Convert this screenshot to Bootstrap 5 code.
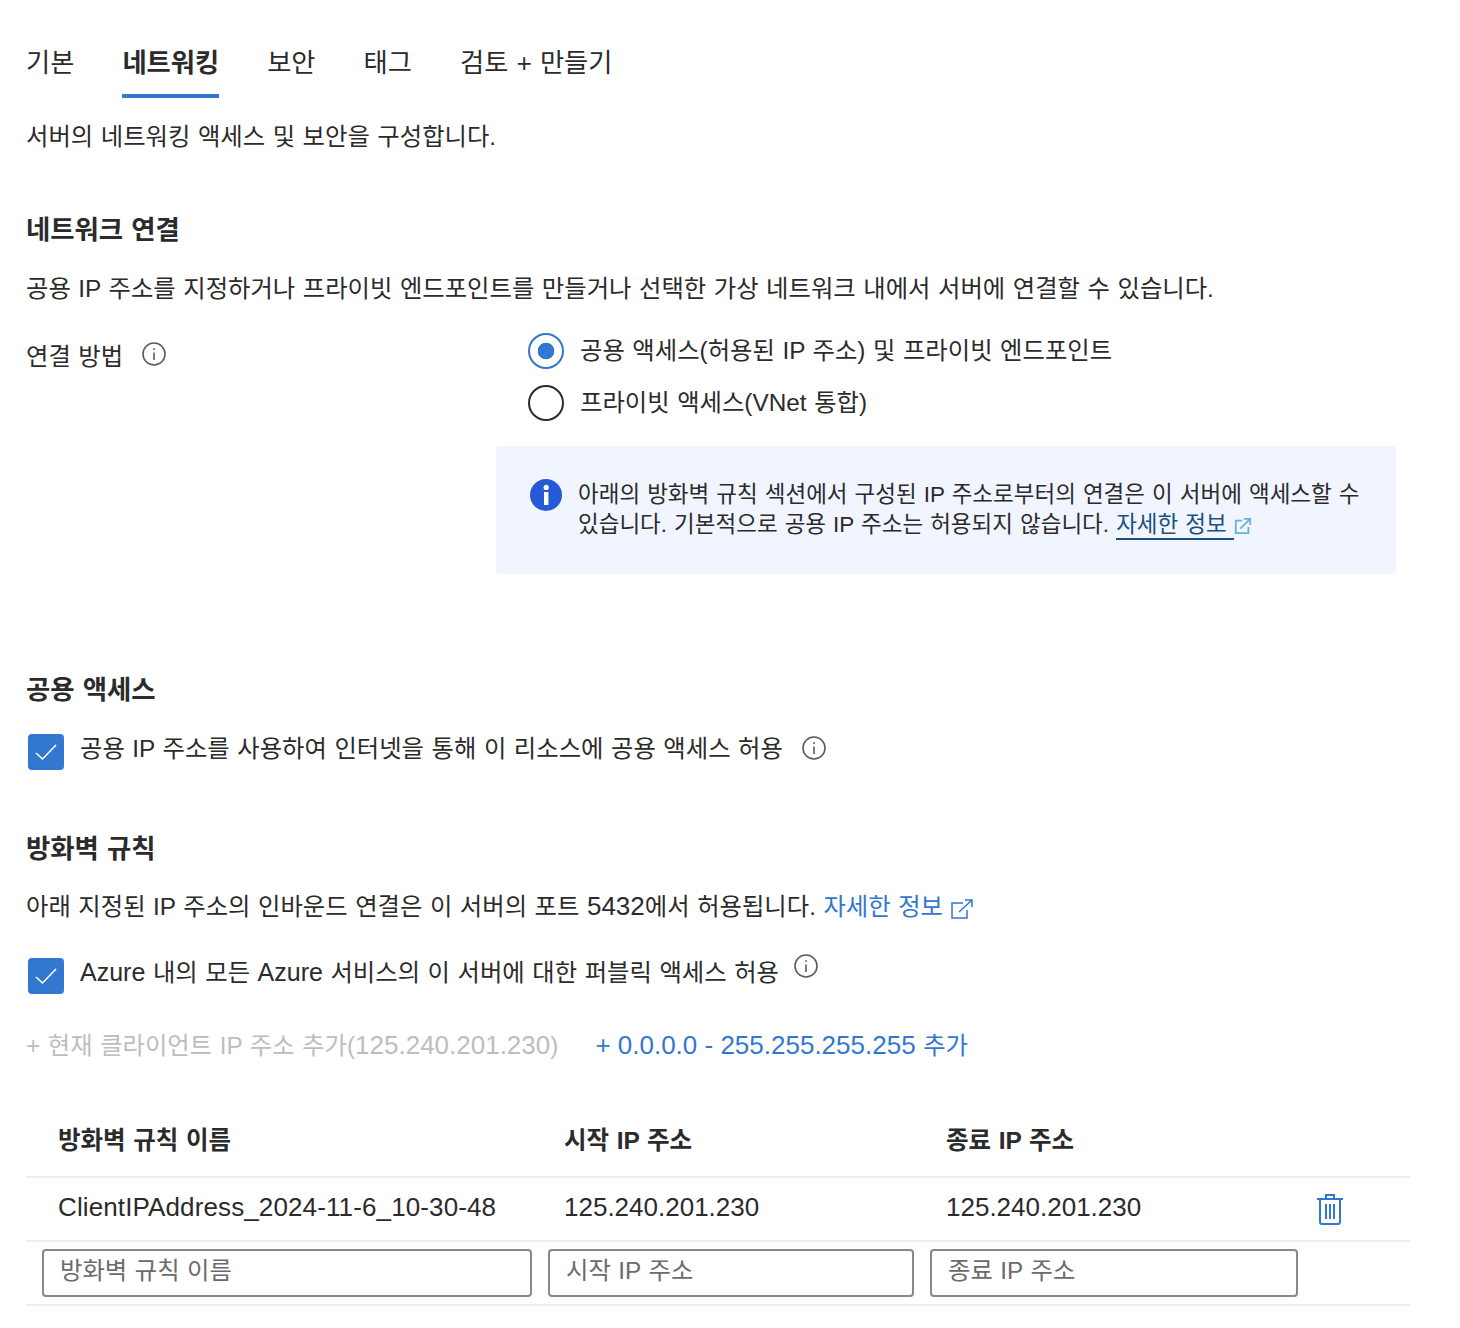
<!DOCTYPE html>
<html lang="ko">
<head>
<meta charset="utf-8">
<title>네트워킹</title>
<link href="https://cdn.jsdelivr.net/npm/bootstrap@5.3.0/dist/css/bootstrap.min.css" rel="stylesheet">
<style>
body{font-family:"Liberation Sans","Noto Sans CJK KR",sans-serif;font-size:24.35px;line-height:36px;word-spacing:.8px;color:#2b2b2b;background:#fff}
.lat{font-size:26px;word-spacing:0;line-height:1}
.az{font-size:25px;line-height:1}
.pg{padding:44px 50px 0 26px;width:1460px}
.tabbar{gap:48px}
.tabbar .nav-link{padding:1px 0 13px;color:#2b2b2b;border-bottom:4px solid transparent;font-size:26.3px;line-height:36px}
.tabbar .nav-link.active{font-weight:700;border-bottom-color:#3277d0;color:#2b2b2b}
.sect{font-size:26.4px;line-height:36px;font-weight:700;margin:0}
.m-21{margin-top:21px}.m-57{margin-top:57px}.m-23{margin-top:23px}.m-26{margin-top:26px}.m-98{margin-top:98px}.m-61{margin-top:61px}.m-22{margin-top:22px}.m-30{margin-top:30px}.m-34{margin-top:34px}
.leftcol{width:470px;padding-top:6px;gap:19px}
.leftcol svg{margin-top:3px}
.opts{width:900px}
.opts .radios{padding-left:32px;display:flex;flex-direction:column;gap:16px}
.form-check-input.rd{width:36px;height:36px;margin:0;border:2px solid #2b2b2b;background-color:#fff;flex:none}
.form-check-input.rd:checked{border:2px solid #3277d0;background-color:#fff;background-image:radial-gradient(circle,#3277d0 0 8px,transparent 8.6px);background-size:auto}
.infobox{margin-top:25px;background:#f0f5ff;border-radius:4px;padding:32px 20px 36px 34px;gap:16px;height:128px}
.infobox>svg{flex:none;margin-top:1px}
.infotxt{line-height:30px;font-size:22.5px;margin-top:2px;white-space:nowrap}
.linkdark{color:#1c4f82;text-decoration:none;border-bottom:2px solid #1c4f82;padding-bottom:1px}
.linkblue{color:#3277d0;text-decoration:none}
.form-check-input.ck{width:36px;height:36px;margin:0;border-radius:4px;background-color:#3277d0;border:none;flex:none;background-size:24px 24px;background-position:center;background-repeat:no-repeat;background-image:url("data:image/svg+xml,%3Csvg xmlns='http://www.w3.org/2000/svg' viewBox='0 0 24 24'%3E%3Cpath d='M2 13l6.5 6L22 5' fill='none' stroke='%23fff' stroke-width='1.6'/%3E%3C/svg%3E")}
.ckrow{gap:16px;padding-left:2px}
.ck3{margin-top:3px!important}
.ic5{margin-top:5px;margin-left:3px}
.icup{margin-top:-1px;margin-left:-1px}
.dimmed{color:#bdbdbd}
.acts{gap:37px}
.rules{table-layout:fixed;width:1384px;margin:37px 0 0;color:#2b2b2b;font-size:24.5px;line-height:36px}
.rules th,.rules td{border-bottom:2px solid #eee;background:transparent;box-shadow:none}
.rules th{padding:22px 0 17px 32px;font-weight:700}
.rules .drow td{padding:11px 0 15px 32px;font-size:26px;word-spacing:0}
.rules .drow td.rname{letter-spacing:.12px}
.rules .irow td{padding:7px 0 7px 16px}
.rules .drow td.del{padding:11px 0 0 19px;vertical-align:top}
.fld{height:48px;border:2px solid #888;border-radius:4px;padding:0 16px 5px;font-size:24.35px;word-spacing:.8px;line-height:36px;color:#2b2b2b;font-family:inherit;box-shadow:none}
.fld::placeholder{color:#6b6b6b;opacity:1}
</style>
</head>
<body>
<div class="pg">
  <ul class="nav tabbar">
    <li class="nav-item"><a class="nav-link" href="#">기본</a></li>
    <li class="nav-item"><a class="nav-link active" href="#">네트워킹</a></li>
    <li class="nav-item"><a class="nav-link" href="#">보안</a></li>
    <li class="nav-item"><a class="nav-link" href="#">태그</a></li>
    <li class="nav-item"><a class="nav-link" href="#">검토 + 만들기</a></li>
  </ul>
  <p class="mb-0 m-21">서버의 네트워킹 액세스 및 보안을 구성합니다.</p>
  <h2 class="sect m-57">네트워크 연결</h2>
  <p class="mb-0 m-23">공용 IP 주소를 지정하거나 프라이빗 엔드포인트를 만들거나 선택한 가상 네트워크 내에서 서버에 연결할 수 있습니다.</p>
  <div class="d-flex m-26">
    <div class="leftcol d-flex align-items-start">
      <span>연결 방법</span>
      <svg width="24" height="24" viewBox="0 0 24 24" fill="none" stroke="#5c5c5c"><circle cx="12" cy="12" r="11" stroke-width="1.6"/><path d="M12 10.5V18" stroke-width="1.6"/><path d="M12 6.2v1.8" stroke-width="1.6"/></svg>
    </div>
    <div class="opts">
      <div class="radios">
        <label class="d-flex align-items-start gap-3"><input class="form-check-input rd" type="radio" name="conn" checked><span>공용 액세스(허용된 IP 주소) 및 프라이빗 엔드포인트</span></label>
        <label class="d-flex align-items-start gap-3"><input class="form-check-input rd" type="radio" name="conn"><span>프라이빗 액세스(VNet 통합)</span></label>
      </div>
      <div class="infobox d-flex align-items-start">
        <svg width="32" height="32" viewBox="0 0 32 32"><circle cx="16" cy="16" r="16" fill="#2659d6"/><rect x="14" y="13" width="4.4" height="13" fill="#fff"/><circle cx="16.2" cy="8.4" r="2.6" fill="#fff"/></svg>
        <div class="infotxt">아래의 방화벽 규칙 섹션에서 구성된 IP 주소로부터의 연결은 이 서버에 액세스할 수<br>있습니다. 기본적으로 공용 IP 주소는 허용되지 않습니다. <a href="#" class="linkdark">자세한 정보 </a> <svg width="18" height="18" viewBox="0 0 20 20" fill="none" stroke="#6ab0de" stroke-width="2"><path d="M9 4H2v14h14v-7"/><path d="M7 13L18 2M11 2h7v7"/></svg></div>
      </div>
    </div>
  </div>
  <h2 class="sect m-98">공용 액세스</h2>
  <div class="d-flex align-items-start ckrow m-23">
    <input class="form-check-input ck ck3" type="checkbox" checked>
    <span>공용 IP 주소를 사용하여 인터넷을 통해 이 리소스에 공용 액세스 허용</span>
    <svg class="ic5" width="24" height="24" viewBox="0 0 24 24" fill="none" stroke="#5c5c5c"><circle cx="12" cy="12" r="11" stroke-width="1.6"/><path d="M12 10.5V18" stroke-width="1.6"/><path d="M12 6.2v1.8" stroke-width="1.6"/></svg>
  </div>
  <h2 class="sect m-61">방화벽 규칙</h2>
  <p class="mb-0 m-22">아래 지정된 IP 주소의 인바운드 연결은 이 서버의 포트 <span class="lat">5432</span>에서 허용됩니다. <a href="#" class="linkblue">자세한 정보 <svg width="22" height="20" viewBox="0 0 22 20" fill="none" stroke="#3277d0" stroke-width="1.5"><path d="M12 4H1v15h15v-8"/><path d="M8 13L21 1M14 1h7v7"/></svg></a></p>
  <div class="d-flex align-items-start ckrow m-30">
    <input class="form-check-input ck ck3" type="checkbox" checked>
    <span><span class="az">Azure</span> 내의 모든 <span class="az">Azure</span> 서비스의 이 서버에 대한 퍼블릭 액세스 허용</span>
    <svg class="icup" width="24" height="24" viewBox="0 0 24 24" fill="none" stroke="#5c5c5c"><circle cx="12" cy="12" r="11" stroke-width="1.6"/><path d="M12 10.5V18" stroke-width="1.6"/><path d="M12 6.2v1.8" stroke-width="1.6"/></svg>
  </div>
  <div class="d-flex acts m-34">
    <span class="dimmed">+ 현재 클라이언트 IP 주소 추가(<span class="lat">125.240.201.230</span>)</span>
    <a href="#" class="linkblue"><span class="lat">+ 0.0.0.0 - 255.255.255.255</span> 추가</a>
  </div>
  <table class="table rules">
    <colgroup><col style="width:506px"><col style="width:382px"><col style="width:384px"><col style="width:112px"></colgroup>
    <thead><tr><th>방화벽 규칙 이름</th><th>시작 IP 주소</th><th>종료 IP 주소</th><th></th></tr></thead>
    <tbody>
      <tr class="drow"><td class="rname">ClientIPAddress_2024-11-6_10-30-48</td><td>125.240.201.230</td><td>125.240.201.230</td><td class="del"><svg width="26" height="32" viewBox="0 0 26 32" fill="none" stroke="#3277d0" stroke-width="2"><path d="M0 6h26"/><path d="M9 5V2h8v3"/><path d="M3 6v23a2 2 0 0 0 2 2h16a2 2 0 0 0 2-2V6"/><path d="M9 11v15M13 11v15M17 11v15"/></svg></td></tr>
      <tr class="irow"><td><input class="form-control fld" placeholder="방화벽 규칙 이름"></td><td><input class="form-control fld" placeholder="시작 IP 주소"></td><td><input class="form-control fld" placeholder="종료 IP 주소"></td><td></td></tr>
    </tbody>
  </table>
</div>
<script src="https://cdn.jsdelivr.net/npm/bootstrap@5.3.0/dist/js/bootstrap.bundle.min.js"></script>
</body>
</html>
